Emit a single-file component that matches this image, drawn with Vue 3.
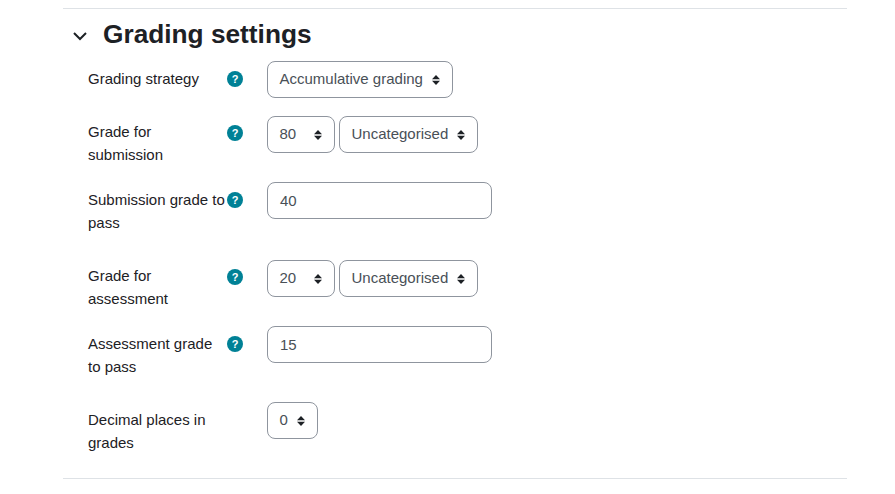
<template>
  <div class="page">
    <section class="settings">
      <header class="section-head">
        <svg class="chevron" viewBox="0 0 16 10" width="16" height="10" aria-hidden="true">
          <path d="M2 2 L8 8 L14 2" fill="none" stroke="#1d2125" stroke-width="2" />
        </svg>
        <h3 class="title">Grading settings</h3>
      </header>

      <div
        v-for="row in rows"
        :key="row.label"
        class="form-row"
        :class="row.size"
      >
        <label class="form-label">{{ row.label }}</label>
        <span class="help-slot">
          <span v-if="row.help" class="help-icon">?</span>
        </span>
        <div class="controls">
          <template v-for="field in row.fields" :key="field.text">
            <div v-if="field.input" class="text-input">{{ field.text }}</div>
            <div v-else class="select" :style="{ width: field.width + 'px' }">
              <span class="select-text">{{ field.text }}</span>
              <svg class="arrows" viewBox="0 0 10 14" width="10" height="14" aria-hidden="true">
                <path d="M5 2 L9 6.3 L1 6.3 Z M5 12 L9 7.7 L1 7.7 Z" fill="#1d2125" />
              </svg>
            </div>
          </template>
        </div>
      </div>
    </section>
  </div>
</template>

<script setup>
// Form rows of the grading section
const rows = [
  {
    label: 'Grading strategy',
    size: 'row-single',
    help: true,
    fields: [{ text: 'Accumulative grading', width: 186 }]
  },
  {
    label: 'Grade for submission',
    size: 'row-double',
    help: true,
    fields: [
      { text: '80', width: 68 },
      { text: 'Uncategorised', width: 139 }
    ]
  },
  {
    label: 'Submission grade to pass',
    size: 'row-input',
    help: true,
    fields: [{ text: '40', input: true }]
  },
  {
    label: 'Grade for assessment',
    size: 'row-double',
    help: true,
    fields: [
      { text: '20', width: 68 },
      { text: 'Uncategorised', width: 139 }
    ]
  },
  {
    label: 'Assessment grade to pass',
    size: 'row-input-short',
    help: true,
    fields: [{ text: '15', input: true }]
  },
  {
    label: 'Decimal places in grades',
    size: 'row-last',
    help: false,
    fields: [{ text: '0', width: 51 }]
  }
]
</script>

<style>
html,
body {
  background: #fff;
}
</style>

<style scoped>
.page {
  width: 895px;
  height: 494px;
  padding-top: 8px;
  box-sizing: border-box;
  font-family: "Liberation Sans", Arial, sans-serif;
  font-size: 15px;
  color: #1d2125;
}

.settings {
  width: 784px;
  height: 471px;
  margin-left: 63px;
  box-sizing: border-box;
  border-top: 1px solid #dee2e6;
  border-bottom: 1px solid #dee2e6;
}

.section-head {
  display: flex;
  align-items: center;
  height: 52px;
  padding-left: 9px;
}

.chevron {
  margin-right: 15px;
  margin-top: 2px;
}

.title {
  margin: 0 0 2px;
  font-size: 26.25px;
  font-weight: 700;
  line-height: 50px;
}

.form-row {
  display: flex;
  align-items: flex-start;
  padding-left: 25px;
}

.row-single { height: 55px; --label-top: 6px; --help-top: 10px; }
.row-double { height: 66px; --label-top: 4px; --help-top: 9px; }
.row-input { height: 78px; --label-top: 6px; --help-top: 10px; }
.row-input-short { height: 76px; --label-top: 6px; --help-top: 10px; }
.row-last { height: 76px; --label-top: 6px; --help-top: 10px; }

.form-label {
  width: 139px;
  padding-top: var(--label-top);
  line-height: 23px;
}

.help-slot {
  width: 16px;
  height: 16px;
  margin-top: var(--help-top);
  margin-right: 24px;
  flex-shrink: 0;
}

.help-icon {
  display: block;
  width: 16px;
  height: 16px;
  border-radius: 50%;
  background: #008196;
  color: #fff;
  font-size: 11px;
  font-weight: 700;
  line-height: 16px;
  text-align: center;
}

.controls {
  display: flex;
  gap: 4px;
}

.select {
  display: flex;
  align-items: center;
  justify-content: space-between;
  height: 37px;
  padding: 0 12px;
  box-sizing: border-box;
  border: 1px solid #8f959e;
  border-radius: 8px;
  color: #495057;
  background: #fff;
}

.select-text {
  margin-left: -0.5px;
  margin-bottom: 2px;
  white-space: nowrap;
}

.arrows {
  flex-shrink: 0;
  margin-right: -1px;
}

.text-input {
  width: 225px;
  height: 37px;
  padding: 0 12px;
  box-sizing: border-box;
  border: 1px solid #8f959e;
  border-radius: 8px;
  color: #495057;
  line-height: 35px;
}
</style>
